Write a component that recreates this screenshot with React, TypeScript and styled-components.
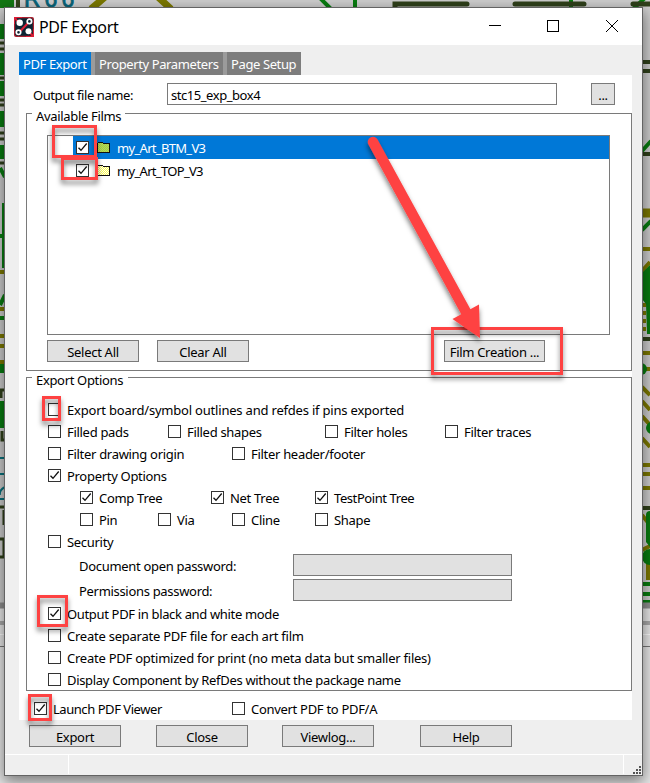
import React from "react";
import styled, { createGlobalStyle } from "styled-components";

const GlobalStyle = createGlobalStyle`
  * { box-sizing: border-box; }
  body { margin: 0; overflow: hidden; }
`;

const Desktop = styled.div`
  position: relative;
  width: 650px;
  height: 783px;
  overflow: hidden;
  padding: 7px 0 0 4px;
  background: #e9e9e9;
  font-family: "Noto Sans", "Open Sans", sans-serif;
  font-size: 13px;
  line-height: 22px;
  color: #000;
`;

const Board = styled.svg`
  position: absolute;
  inset: 0;
`;

const Annotations = styled.svg`
  position: absolute;
  inset: 0;
  pointer-events: none;
`;

const Window = styled.main`
  position: relative;
  width: 639px;
  height: 769px;
  display: flex;
  flex-direction: column;
  border: 1px solid #636363;
  background: #efefef;
  box-shadow: 0 5px 14px 1px rgba(0, 0, 0, 0.48);
`;

const TitleBar = styled.header`
  height: 37px;
  flex: none;
  display: flex;
  align-items: center;
  padding-left: 9px;
  background: #fff;
`;

const Title = styled.h1`
  flex: 1;
  margin: 0 0 0 5px;
  font-size: 16px;
  font-weight: 400;
  letter-spacing: -0.38px;
`;

const WindowControls = styled.svg`
  margin: 0 24px 2px 0;
`;

const Tabs = styled.nav`
  display: flex;
  flex: none;
  gap: 4px;
  width: 282px;
  height: 23px;
  margin: 7px 0 0 14px;
  background: #9b9b9b;
`;

const Tab = styled.div<{ $active?: boolean; $width: number }>`
  width: ${(p) => p.$width}px;
  padding-left: 4px;
  line-height: 25px;
  white-space: nowrap;
  letter-spacing: -0.39px;
  color: #fff;
  background: ${(p) => (p.$active ? "#0078d7" : "#7d7d7d")};
`;

const Panel = styled.section`
  flex: none;
  width: 613px;
  height: 645px;
  margin-left: 14px;
  padding-left: 7px;
  background: #fff;
`;

const FileRow = styled.div`
  display: flex;
  height: 38px;
  padding: 8px 0 0 7px;
`;

const Caption = styled.label<{ $width: number }>`
  width: ${(p) => p.$width}px;
  padding-top: 1px;
  white-space: nowrap;
  letter-spacing: ${(p) => (p.$width > 200 ? -0.31 : -0.42)}px;
`;

const Field = styled.div<{ $width: number; $disabled?: boolean }>`
  width: ${(p) => p.$width}px;
  height: 22px;
  padding-left: 3px;
  line-height: 23px;
  letter-spacing: -0.45px;
  border: 1px solid #7a7a7a;
  background: ${(p) => (p.$disabled ? "#e1e1e1" : "#fff")};
`;

const Button = styled.button<{ $width?: number; $gap?: number }>`
  width: ${(p) => p.$width ?? 92}px;
  height: 22px;
  margin: 0 0 0 ${(p) => p.$gap ?? 0}px;
  padding: 1px 0 0;
  border: 1px solid #7a7a7a;
  border-radius: 0;
  background: #e1e1e1;
  color: #000;
  font: inherit;
  line-height: 21px;
  letter-spacing: -0.3px;
  white-space: nowrap;
`;

const Group = styled.section<{ $height: number }>`
  width: 606px;
  height: ${(p) => p.$height}px;
  margin-bottom: 6px;
  border: 1px solid #7a7a7a;
`;

const Legend = styled.h2<{ $width: number }>`
  width: ${(p) => p.$width}px;
  height: 14px;
  margin: -5px 0 0 5px;
  padding-left: 4px;
  font-size: 13px;
  font-weight: 400;
  line-height: 14px;
  letter-spacing: -0.33px;
  white-space: nowrap;
  background: #fff;
`;

const FilmList = styled.ul`
  width: 563px;
  height: 200px;
  margin: 12px 0 5px 20px;
  padding: 0;
  list-style: none;
  border: 1px solid #7a7a7a;
`;

const FilmRow = styled.li<{ $selected?: boolean }>`
  display: flex;
  height: 23px;
  margin-left: 25px;
  padding: 5px 0 0 3px;
  color: ${(p) => (p.$selected ? "#fff" : "#000")};
  background: ${(p) => (p.$selected ? "#0078d7" : "#fff")};
`;

const FilmName = styled.span`
  margin: -5px 0 0 7px;
  line-height: 24px;
  letter-spacing: -0.68px;
`;

const FolderSvg = styled.svg`
  margin: 0 0 0 8px;
`;

const ButtonRow = styled.div`
  display: flex;
  padding-left: 20px;
`;

const Options = styled.div`
  padding-top: 12px;
`;

const OptionRow = styled.div<{ $indent: number }>`
  display: flex;
  height: 22px;
  padding-left: ${(p) => p.$indent}px;
`;

const Option = styled.label<{ $width?: number; $spacing?: number }>`
  display: flex;
  width: ${(p) => (p.$width ? `${p.$width}px` : "auto")};
  padding-top: 4px;
  white-space: nowrap;
  letter-spacing: ${(p) => p.$spacing ?? -0.3}px;
`;

const OptionText = styled.span`
  margin: -4px 0 0 6px;
`;

const PasswordRow = styled.div`
  display: flex;
  height: 25px;
  padding: 1px 0 0 52px;
`;

const Passwords = styled.div`
  height: 50px;
`;

const LaunchRow = styled.div`
  padding: 1px 0 0 8px;
`;

const Footer = styled.footer`
  display: flex;
  flex: none;
  height: 29px;
  padding: 5px 0 0 24px;
`;

const StatusBar = styled.div`
  display: flex;
  flex: none;
  height: 20px;
  margin-top: 5px;
  border-top: 1px solid #fff;
`;

const StatusCell = styled.div<{ $width: number }>`
  width: ${(p) => p.$width}px;
  height: 19px;
  border-right: 1px solid #fff;
`;

const Grip = styled.svg`
  margin: 11px 0 0 8px;
`;

function Check({ on }: { on?: boolean }) {
  return (
    <svg width="13" height="13" viewBox="0 0 13 13" fill="none">
      <rect x=".5" y=".5" width="12" height="12" fill="#fff" stroke="#333" />
      {on && <path d="M2.5 6.7 5 9.3 10.7 2.5" stroke="#111" strokeWidth="1.3" />}
    </svg>
  );
}

function Folder({ base, dot, dotId }: { base: string; dot: string; dotId: string }) {
  return (
    <FolderSvg width="13" height="13" viewBox="0 0 13 13" shapeRendering="crispEdges">
      <defs>
        <pattern id={dotId} width="2" height="2" patternUnits="userSpaceOnUse">
          <rect width="2" height="2" fill={base} />
          <path d="M0 0h1v1H0zM1 1h1v1H1z" fill={dot} />
        </pattern>
      </defs>
      <path d="M.5 11.5v-9l1-1h4l1 1h6v9z" fill={`url(#${dotId})`} stroke="#111" />
    </FolderSvg>
  );
}

type Item = { text: string; width?: number; on?: boolean; spacing?: number };

function Choices({ indent, items }: { indent: number; items: Item[] }) {
  return (
    <OptionRow $indent={indent}>
      {items.map((item) => (
        <Option key={item.text} $width={item.width} $spacing={item.spacing}>
          <Check on={item.on} />
          <OptionText>{item.text}</OptionText>
        </Option>
      ))}
    </OptionRow>
  );
}

function AppIcon() {
  return (
    <svg width="20" height="20" viewBox="0 0 20 20">
      <rect width="20" height="20" rx="2" fill="#a8202f" />
      <rect x="1.2" y="1.2" width="17.6" height="17.6" rx="1.5" fill="#0b2533" />
      <path d="M0 7V2q0-2 2-2h6M12 20h6q2 0 2-2v-6M4.5 5.5 1 1M15.5 15.5 19 19M5 15.5 15.5 4.5" fill="none" stroke="#dc1d36" strokeWidth="2" />
      <circle cx="5.7" cy="5.7" r="3.2" fill="#fff" />
      <circle cx="14.5" cy="14.3" r="3" fill="#fff" />
      <circle cx="15.4" cy="4.4" r="2.2" fill="#0b2533" stroke="#fff" strokeWidth="1.7" />
      <circle cx="4.5" cy="15.3" r="2.2" fill="#0b2533" stroke="#fff" strokeWidth="1.7" />
    </svg>
  );
}

function BoardArt() {
  return (
    <Board width="650" height="783" viewBox="0 0 650 783" fill="none">
      <rect width="650" height="604" fill="#cecece" />
      <path d="M0 0h14v8H0z" fill="#137813" />
      <path d="M18 0v8" stroke="#35451d" strokeWidth="4" />
      <text x="24" y="7" fontSize="23" letterSpacing="4" fill="#08657a" stroke="#08657a" strokeWidth=".8" fontFamily="Liberation Sans">R66</text>
      <path d="M105-3 91 9M158-3l13 12" stroke="#7c7900" strokeWidth="7" />
      <path d="M319-3l12 12M355 0v8M571 0v8M633 9l13-12" stroke="#087d10" strokeWidth="4" />
      <path d="M395 8V4h72M515 4h69M633 4h20" stroke="#30411b" strokeWidth="5" strokeLinecap="round" />
      <path d="M0 24h5v15H0zM0 53h5v22H0zM0 81h5v15H0zM0 111h5v16H0zM0 145h5v14H0zM0 364h5v9H0zM0 401h5v27H0z" fill="#087d10" />
      <path d="M0 43h5M0 49h5M0 78h5M0 100h5M0 105h5M0 133h5M0 139h5M0 163h5" stroke="#30411b" strokeWidth="3" />
      <path d="M0 168l5 9M4 203v65M0 236h5M0 305l5-10M0 318h5" stroke="#087d10" strokeWidth="4" />
      <path d="M0 272h5M0 309h5M0 336h5M0 346h5M0 362h5" stroke="#7c7900" strokeWidth="4" />
      <path d="M1 398v-8h4M2 431v9h3M0 507h5M4 510v15M0 539h5M4 540v17M0 557h5" stroke="#30411b" strokeWidth="3" />
      <path d="M0 458h5M0 474h5M5 487q-6 3-5 8M0 499h5" stroke="#08727d" strokeWidth="2" />
      <path d="M642 62h8M642 71h8M642 154h8M642 339h8M642 508h8" stroke="#30411b" strokeWidth="4" />
      <path d="M642 213h8" stroke="#7c7900" strokeWidth="9" />
      <path d="M642 249h8M642 353h8M642 369h8M642 465h8M642 474h8M642 488h8M642 305h4M642 313h4M642 321h4M642 329h4M642 387l8 8M642 401l8 9M642 416l8 9M642 438l8 9M642 515l8 10M642 550l8-4M642 271l8-9M648 560v20" stroke="#7c7900" strokeWidth="4" />
      <path d="M642 151l9-10M642 230l9-9M642 584h8M642 594h8M642 602h8" stroke="#087d10" strokeWidth="4" />
      <path d="M642 273l8-8v69h-3l-1-30-4-5z" fill="#087d10" />
      <circle cx="641" cy="369" r="6" fill="#087d10" />
      <circle cx="652" cy="428" r="6" fill="#087d10" />
      <path d="M650 511q-4 0-4 4v27l4 5z" fill="#087d10" />
      <circle cx="650" cy="557" r="8" fill="#087d10" />
      <path d="M0 605.5h650" stroke="#909090" strokeWidth="6" />
      <path d="M0 623h650" stroke="#ababab" strokeWidth="4" />
      <path d="M0 634.5h650" stroke="#fff" />
      <path d="M0 646.5h650" stroke="#777" />
    </Board>
  );
}

function Markup() {
  return (
    <Annotations width="650" height="783" viewBox="0 0 650 783" fill="none">
      <defs>
        <filter id="drop" x="-30%" y="-30%" width="160%" height="170%">
          <feDropShadow dx="0" dy="4" stdDeviation="2.5" floodColor="#000" floodOpacity=".5" />
        </filter>
      </defs>
      <g stroke="#fe4343" strokeWidth="3" filter="url(#drop)">
        <rect x="53.5" y="126.5" width="42" height="30" />
        <rect x="62.5" y="158.5" width="34" height="20" />
        <rect x="43.5" y="397.5" width="16" height="22" />
        <rect x="38.5" y="596.5" width="28" height="29" />
        <rect x="29.5" y="695.5" width="21" height="24" />
        <rect x="432.5" y="328.5" width="129" height="45" />
      </g>
      <g filter="url(#drop)">
        <path d="M373 142 466 312" stroke="#fe4343" strokeWidth="10.5" strokeLinecap="round" />
        <path d="M480 338 452.5 319 479 304.5z" fill="#fe4343" />
      </g>
    </Annotations>
  );
}

export default function App() {
  return (
    <Desktop>
      <GlobalStyle />
      <BoardArt />
      <Window>
        <TitleBar>
          <AppIcon />
          <Title>PDF Export</Title>
          <WindowControls width="130" height="14" viewBox="0 0 130 14" fill="none" stroke="#000">
            <path d="M1 6.5h12" />
            <rect x="59.5" y="1.5" width="11" height="11" />
            <path d="m118 1 12 12m0-12-12 12" />
          </WindowControls>
        </TitleBar>
        <Tabs>
          <Tab $active $width={72}>PDF Export</Tab>
          <Tab $width={128}>Property Parameters</Tab>
          <Tab $width={74}>Page Setup</Tab>
        </Tabs>
        <Panel>
          <FileRow>
            <Caption $width={134}>Output file name:</Caption>
            <Field $width={390}>stc15_exp_box4</Field>
            <Button $width={24} $gap={34}>...</Button>
          </FileRow>
          <Group $height={258}>
            <Legend $width={93}>Available Films</Legend>
            <FilmList>
              <FilmRow $selected>
                <Check on />
                <Folder base="#c8e03c" dot="#8fc865" dotId="film-selected" />
                <FilmName>my_Art_BTM_V3</FilmName>
              </FilmRow>
              <FilmRow>
                <Check on />
                <Folder base="#fff" dot="#ffff4d" dotId="film-plain" />
                <FilmName>my_Art_TOP_V3</FilmName>
              </FilmRow>
            </FilmList>
            <ButtonRow>
              <Button>Select All</Button>
              <Button $gap={18}>Clear All</Button>
              <Button $width={101} $gap={195}>Film Creation ...</Button>
            </ButtonRow>
          </Group>
          <Group $height={314}>
            <Legend $width={96}>Export Options</Legend>
            <Options>
              <Choices indent={21} items={[{ text: "Export board/symbol outlines and refdes if pins exported", spacing: -0.2 }]} />
              <Choices
                indent={21}
                items={[
                  { text: "Filled pads", width: 120 },
                  { text: "Filled shapes", width: 157 },
                  { text: "Filter holes", width: 120 },
                  { text: "Filter traces" },
                ]}
              />
              <Choices indent={21} items={[{ text: "Filter drawing origin", width: 184 }, { text: "Filter header/footer" }]} />
              <Choices indent={21} items={[{ text: "Property Options", on: true }]} />
              <Choices
                indent={53}
                items={[
                  { text: "Comp Tree", width: 131, on: true },
                  { text: "Net Tree", width: 104, on: true },
                  { text: "TestPoint Tree", on: true, spacing: -0.42 },
                ]}
              />
              <Choices
                indent={53}
                items={[
                  { text: "Pin", width: 78 },
                  { text: "Via", width: 74 },
                  { text: "Cline", width: 83 },
                  { text: "Shape" },
                ]}
              />
              <Choices indent={21} items={[{ text: "Security" }]} />
              <Passwords>
                <PasswordRow>
                  <Caption $width={214}>Document open password:</Caption>
                  <Field $width={219} $disabled />
                </PasswordRow>
                <PasswordRow>
                  <Caption $width={214}>Permissions password:</Caption>
                  <Field $width={219} $disabled />
                </PasswordRow>
              </Passwords>
              <Choices indent={21} items={[{ text: "Output PDF in black and white mode", on: true, spacing: -0.34 }]} />
              <Choices indent={21} items={[{ text: "Create separate PDF file for each art film", spacing: -0.24 }]} />
              <Choices indent={21} items={[{ text: "Create PDF optimized for print (no meta data but smaller files)", spacing: -0.24 }]} />
              <Choices indent={21} items={[{ text: "Display Component by RefDes without the package name", spacing: -0.32 }]} />
            </Options>
          </Group>
          <LaunchRow>
            <Choices indent={0} items={[{ text: "Launch PDF Viewer", width: 198, on: true, spacing: -0.45 }, { text: "Convert PDF to PDF/A" }]} />
          </LaunchRow>
        </Panel>
        <Footer>
          <Button>Export</Button>
          <Button $gap={35}>Close</Button>
          <Button $gap={34}>Viewlog...</Button>
          <Button $gap={46}>Help</Button>
        </Footer>
        <StatusBar>
          <StatusCell $width={64} />
          <StatusCell $width={555} />
          <Grip width="10" height="8" viewBox="0 0 10 8" fill="#555" shapeRendering="crispEdges">
            <path d="M7 0h2v2H7zM7 3h2v2H7zM4 3h2v2H4zM7 6h2v2H7zM4 6h2v2H4zM1 6h2v2H1z" />
          </Grip>
        </StatusBar>
      </Window>
      <Markup />
    </Desktop>
  );
}
